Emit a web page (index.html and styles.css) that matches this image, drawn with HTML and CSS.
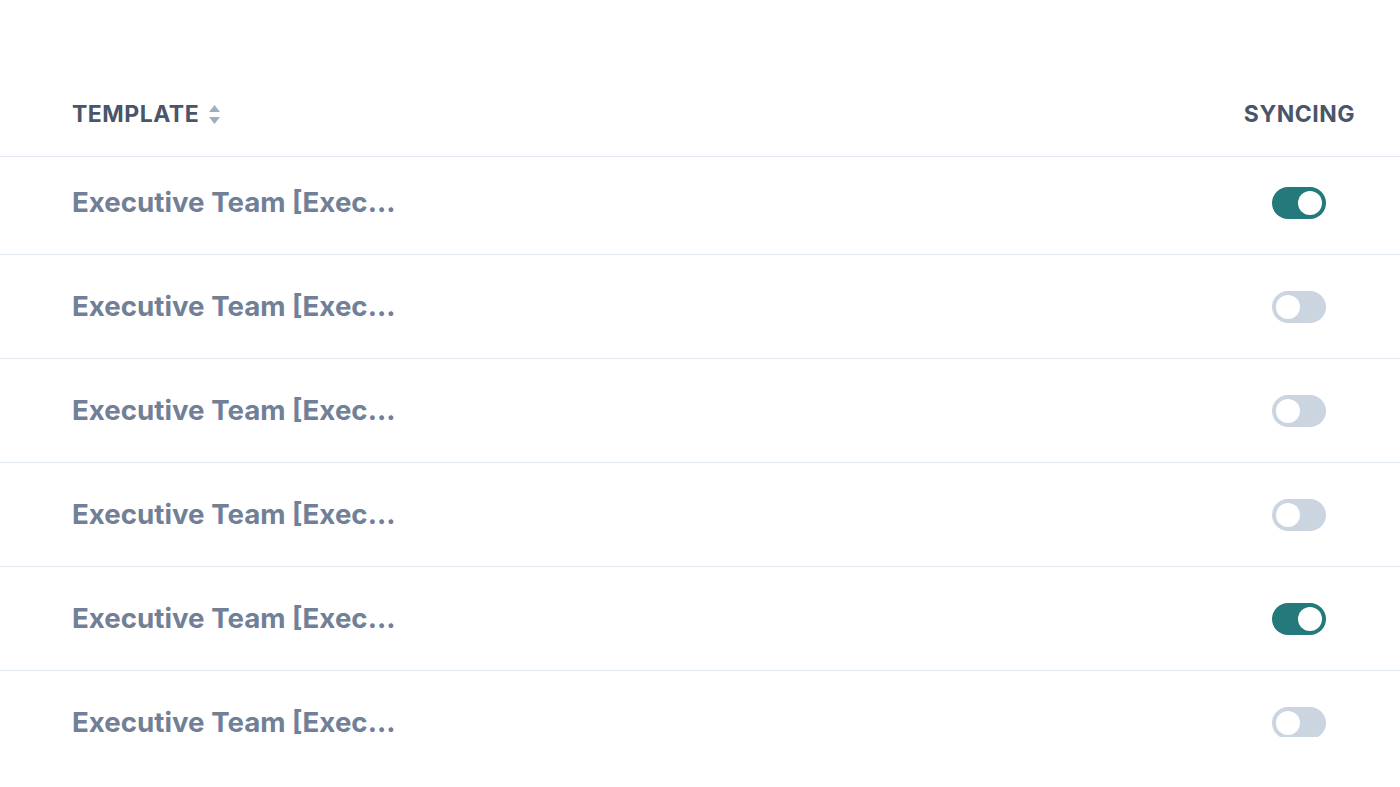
FILE: index.html
```html
<!DOCTYPE html>
<html lang="en">
<head>
    <meta charset="UTF-8">
    <meta name="viewport" content="width=device-width, initial-scale=1.0">
    <title>Templates</title>
    <link rel="stylesheet" href="styles.css">
</head>
<body>
    <div class="table">
        <div class="table-head">
            <div class="col-name">
                Template
                <svg class="sort" width="13" height="21" viewBox="0 0 13 21">
                    <path d="M6.5 1 L12 8 L1 8 Z" />
                    <path d="M1 13 L12 13 L6.5 20 Z" />
                </svg>
            </div>
            <div class="col-sync">Syncing</div>
        </div>

        <div class="row row-first">
            <div class="col-name"><span class="name">Executive Team [Exec...</span></div>
            <div class="col-sync"><span class="toggle on"></span></div>
        </div>
        <div class="row">
            <div class="col-name"><span class="name">Executive Team [Exec...</span></div>
            <div class="col-sync"><span class="toggle"></span></div>
        </div>
        <div class="row">
            <div class="col-name"><span class="name">Executive Team [Exec...</span></div>
            <div class="col-sync"><span class="toggle"></span></div>
        </div>
        <div class="row">
            <div class="col-name"><span class="name">Executive Team [Exec...</span></div>
            <div class="col-sync"><span class="toggle"></span></div>
        </div>
        <div class="row">
            <div class="col-name"><span class="name">Executive Team [Exec...</span></div>
            <div class="col-sync"><span class="toggle on"></span></div>
        </div>
        <div class="row">
            <div class="col-name"><span class="name">Executive Team [Exec...</span></div>
            <div class="col-sync"><span class="toggle"></span></div>
        </div>
    </div>
</body>
</html>
```

FILE: styles.css
```css
body {
    margin: 0;
    padding: 0;
    background: #ffffff;
    font-family: Inter, "Noto Sans", Arial, sans-serif;
}

.table {
    height: 737px;
    overflow: hidden;
}

.table-head,
.row {
    display: grid;
    grid-template-columns: 1fr 112px;
    align-items: center;
    padding: 0 45px 0 72px;
    border-bottom: 1px solid #e2e8f0;
}

.table-head {
    height: 157px;
    box-sizing: border-box;
    align-items: end;
    color: #4a5568;
    font-size: 23px;
    font-weight: 700;
    letter-spacing: 0.5px;
    text-transform: uppercase;
}

.table-head > div {
    padding-bottom: 28px;
    display: flex;
    align-items: center;
    gap: 9px;
}

.table-head .col-sync {
    justify-content: flex-end;
}

.sort {
    fill: #a0aec0;
}

.row {
    height: 103px;
}

.row-first {
    height: 91px;
    padding-bottom: 6px;
}

.name {
    display: block;
    white-space: nowrap;
    color: #718096;
    font-size: 27.7px;
    font-weight: 700;
    line-height: 1;
}

.col-sync {
    text-align: center;
}

.row .col-sync {
    display: flex;
    justify-content: center;
}

.toggle {
    position: relative;
    display: block;
    width: 54px;
    height: 32px;
    border-radius: 16px;
    background: #cbd5e0;
}

.toggle::after {
    content: "";
    position: absolute;
    top: 4px;
    left: 4px;
    width: 24px;
    height: 24px;
    border-radius: 50%;
    background: #ffffff;
}

.toggle.on {
    background: #24797a;
}

.toggle.on::after {
    left: 26px;
}
```
